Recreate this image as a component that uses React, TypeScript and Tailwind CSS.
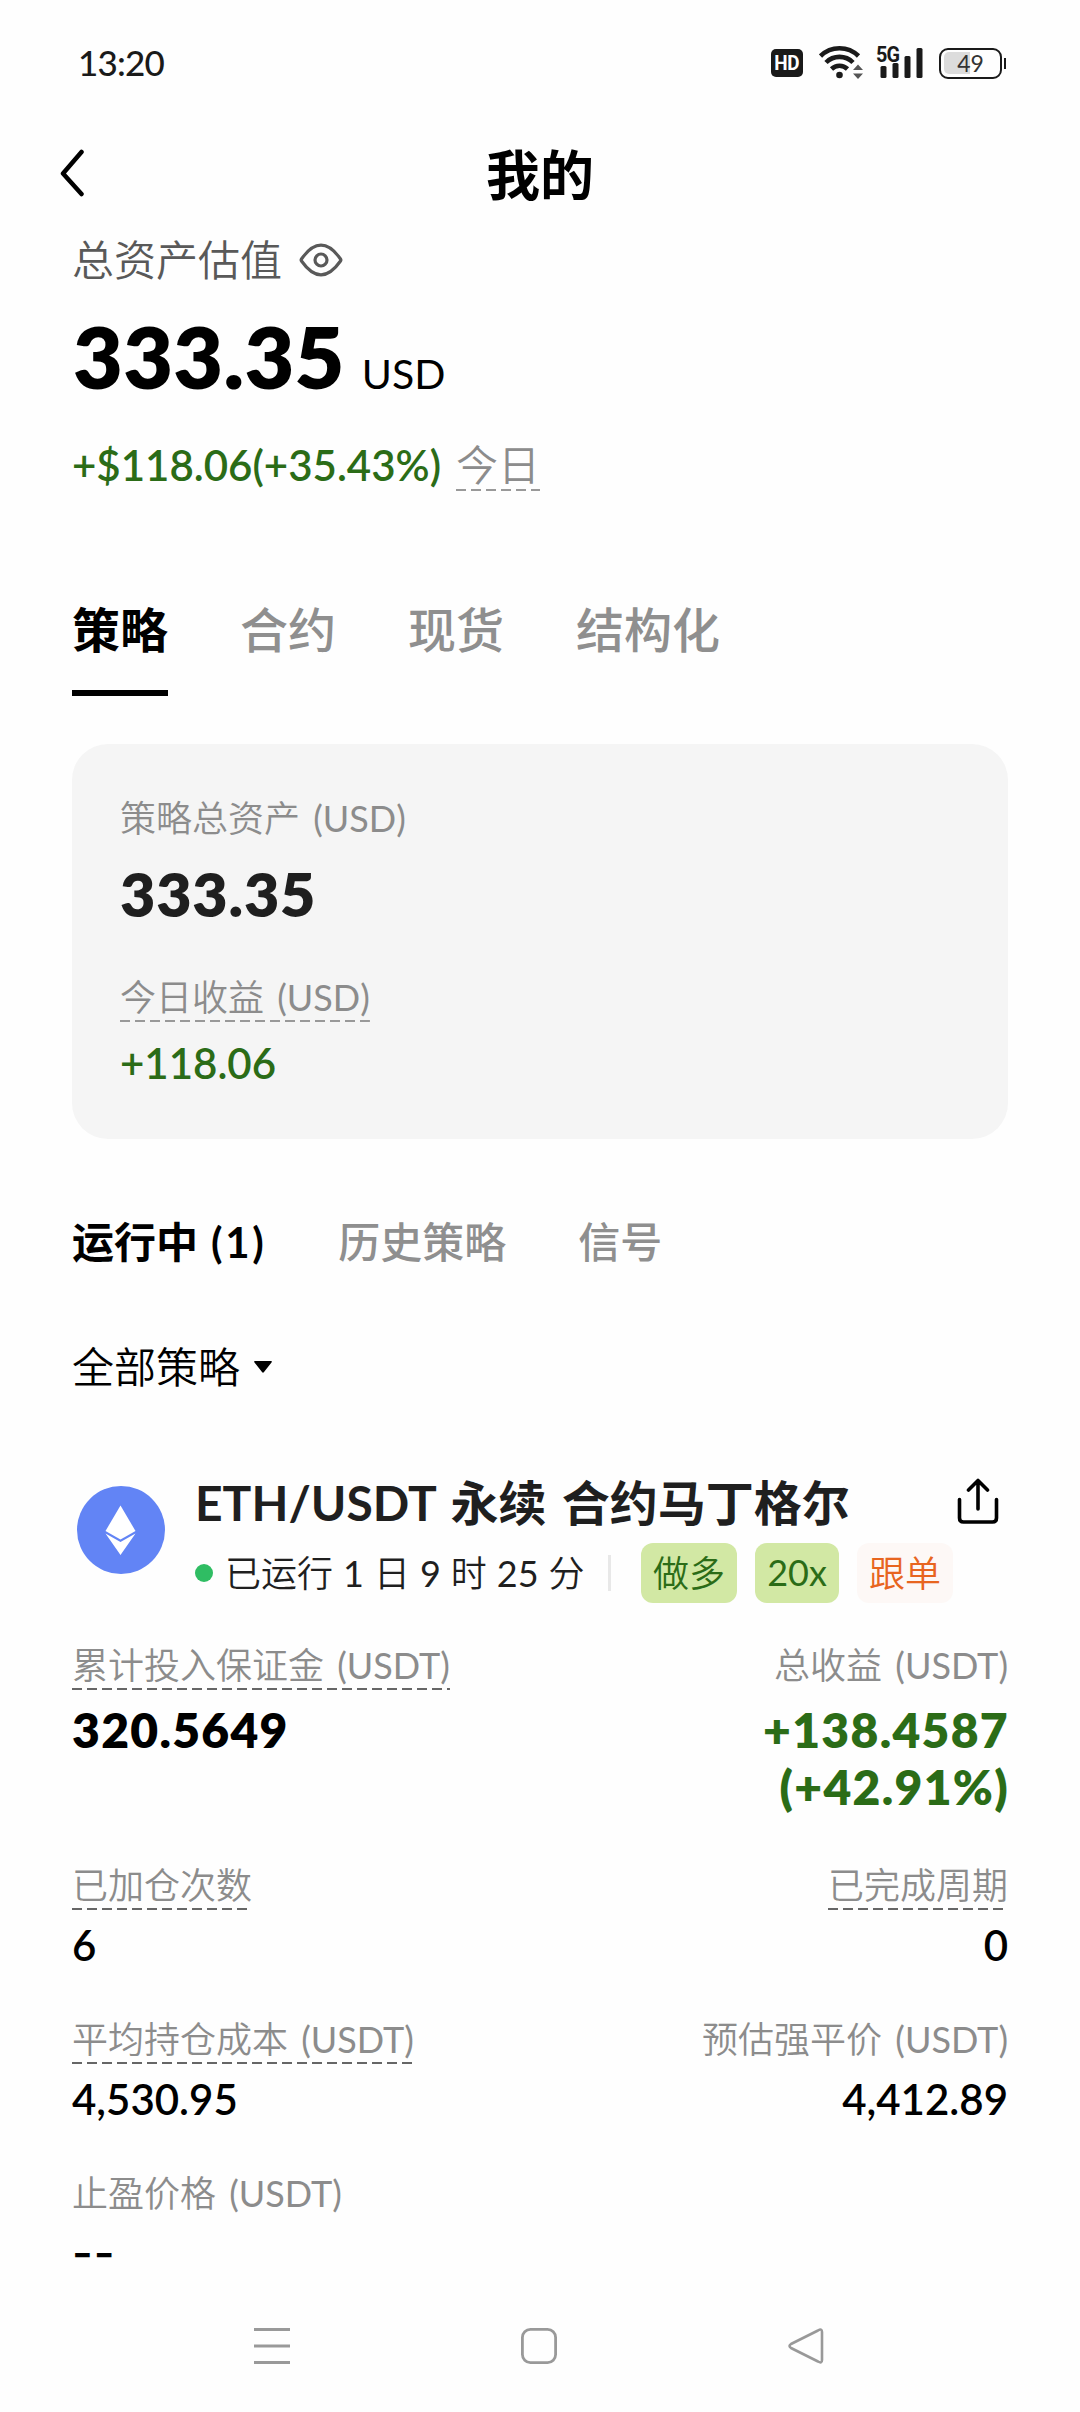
import { useState } from 'react';
import clsx from 'clsx';

const TABS = ['策略', '合约', '现货', '结构化'];
const SUB_TABS = [{ name: '运行中', count: 1 }, { name: '历史策略' }, { name: '信号' }];

const THIN = "font-['Lato','Noto_Sans_CJK_SC_DemiLight','Noto_Sans_CJK_SC',sans-serif] font-normal";
const DASH_LIGHT =
  'bg-[repeating-linear-gradient(90deg,#999_0_10px,transparent_10px_15px)] bg-[length:100%_2px] bg-bottom bg-no-repeat';
const DASH_DARK =
  'bg-[repeating-linear-gradient(90deg,#666_0_10px,transparent_10px_15px)] bg-[length:100%_2px] bg-bottom bg-no-repeat';

function StatusBar() {
  return (
    <div className="h-[124px] flex items-center justify-between pl-[78px] pr-[74px] text-[#1a1a1a]">
      <span className="text-[35px] font-medium leading-none tracking-[-0.8px]">13:20</span>
      <div className="flex items-center">
        <div className="w-8 h-7 mt-0.5 rounded-[5px] bg-[#1a1a1a] flex items-center justify-center">
          <span className="font-['Roboto',sans-serif] text-white text-[21px] leading-none font-bold tracking-[-0.5px] scale-x-90">HD</span>
        </div>
        <svg className="ml-4" width="44" height="36" viewBox="0 0 44 36" fill="none">
          <path d="M1.500 12a27 27 0 0 1 38 0M7 18.500a19 19 0 0 1 27 0M12.500 25a11.500 11.500 0 0 1 16 0" stroke="#1a1a1a" strokeWidth="4.600" />
          <circle cx="20.500" cy="31" r="3.300" fill="#1a1a1a" />
          <path d="M39 20.500l5 5.500H34zM39 35l5-5.500H34z" fill="#555" />
        </svg>
        <div className="relative ml-[14px] w-[47px] h-9">
          <span className="absolute left-[-1px] top-0.5 font-['Roboto',sans-serif] text-[22px] leading-[17px] font-bold tracking-[-1px] scale-x-[0.9] origin-left">
            5G
          </span>
          <svg width="47" height="36" viewBox="0 0 47 36" fill="#1a1a1a">
            <rect x="3.500" y="22" width="6" height="12" rx="1.500" />
            <rect x="15.500" y="19" width="6" height="15" rx="1.500" />
            <rect x="27.500" y="12" width="6" height="22" rx="1.500" />
            <rect x="39.500" y="4" width="6" height="30" rx="1.500" />
          </svg>
        </div>
        <div className="ml-[15px] mt-0.5 relative w-[63px] h-[31px] rounded-[9px] border-[2.5px] border-[#1a1a1a] p-[2.5px]">
          <div className="w-[26px] h-full rounded-l-[5px] bg-[#dcdcdc]" />
          <span className="absolute inset-0 flex items-center justify-center text-[23px] leading-none text-[#333]">49</span>
        </div>
        <div className="ml-0.5 mt-0.5 w-0.5 h-[11px] bg-[#1a1a1a]" />
      </div>
    </div>
  );
}

function EthIcon() {
  return (
    <svg width="88" height="88" viewBox="0 0 88 88">
      <circle cx="44" cy="44" r="44" fill="#6284f5" />
      <path d="M43.500 19.500L58.500 45 43.500 53.500 28.500 45z" fill="#fff" />
      <path d="M28.500 47.500l15 8.500 15-8.500-15 21.500z" fill="#fff" />
    </svg>
  );
}

interface FieldProps {
  label: string;
  value?: string[];
  dashed?: boolean;
  right?: boolean;
  strong?: boolean;
  green?: boolean;
}

function Field({ label, value, dashed, right, strong, green }: FieldProps) {
  return (
    <div className={clsx('flex flex-col', right ? 'items-end' : 'items-start')}>
      <span className={clsx('text-[36px] leading-[50px] text-[#8c8c8c] [word-spacing:4px]', THIN, dashed && DASH_DARK)}>
        {label}
      </span>
      <div
        className={clsx(
          'flex flex-col',
          right && 'items-end',
          strong ? 'mt-[11px] text-[48px] leading-[57px] font-extrabold tracking-[1.3px]' : 'mt-[9px] text-[42px] leading-[52px] font-semibold',
          right && strong && '-mr-px',
          green ? 'text-[#2b6c17]' : 'text-black',
        )}
      >
        {value ? (
          value.map((line) => <span key={line}>{line}</span>)
        ) : (
          <span className="font-['Inter',sans-serif] text-[45px] font-medium tracking-[1px]">--</span>
        )}
      </div>
    </div>
  );
}

export default function App() {
  const [tab, setTab] = useState(TABS[0]);
  const [subTab, setSubTab] = useState(SUB_TABS[0].name);

  return (
    <div className="w-[1080px] h-[2412px] overflow-hidden bg-[#fefefe] text-black whitespace-nowrap flex flex-col font-['Lato','Noto_Sans_CJK_SC',sans-serif]">
      <StatusBar />

      {/* Header */}
      <div className="h-[98px] grid grid-cols-[1fr_auto_1fr] items-center px-[60px]">
        <svg width="24" height="48" viewBox="0 0 24 48" fill="none" stroke="#000" strokeWidth="4.500" strokeLinecap="round" strokeLinejoin="round">
          <path d="M21.500 3L3 24.500 21.500 45" />
        </svg>
        <h1 className="pt-1.5 text-[54px] leading-none font-bold">我的</h1>
      </div>

      {/* Total assets */}
      <div className="px-[72px]">
        <div className="h-[76px] flex items-center">
          <span className={clsx('text-[42px] leading-none text-[#595959]', THIN)}>总资产估值</span>
          <svg className="ml-[17px]" width="44" height="34" viewBox="0 0 44 34" fill="none" stroke="#595959" strokeWidth="3.200" strokeLinejoin="round">
            <path d="M2.500 18Q1.800 17 2.500 16C9.500 6 15 2.200 22 2.200S34.500 6 41.500 16q.7 1 0 2C34.500 28 29 31.800 22 31.800S9.500 28 2.500 18z" />
            <circle cx="22" cy="17" r="6" />
          </svg>
        </div>
        <div className="h-[118px] flex items-baseline">
          <span className="ml-px text-[86px] leading-[116px] font-extrabold tracking-[0.3px]">333.35</span>
          <span className="ml-[17px] text-[41px]">USD</span>
        </div>
        <div className="h-[98px] flex items-center text-[42px]">
          <span className="font-semibold text-[#2b6c17]">+$118.06(+35.43%)</span>
          <span className={clsx('ml-[15px] leading-[52px] text-[#8c8c8c]', THIN, DASH_LIGHT)}>今日</span>
        </div>
      </div>

      {/* Main tabs */}
      <div className="mt-[82px] px-[72px] flex gap-[72px]">
        {TABS.map((name) => (
          <button
            key={name}
            onClick={() => setTab(name)}
            className={clsx(
              'h-[100px] pt-1 flex items-start text-[48px] leading-[60px] border-b-[6px]',
              tab === name ? 'font-bold text-black border-black' : 'font-medium text-[#8f8f8f] border-transparent',
            )}
          >
            {name}
          </button>
        ))}
      </div>

      {/* Strategy summary */}
      <div className="mt-12 mx-[72px] h-[395px] rounded-[36px] bg-[#f5f5f5] px-12 pt-[49px] flex flex-col items-start">
        <span className={clsx('text-[36px] leading-[50px] text-[#8c8c8c] [word-spacing:4px]', THIN)}>策略总资产 (USD)</span>
        <span className="mt-[13px] text-[61px] leading-[76px] font-extrabold tracking-[0.8px] text-[#1f1f1f]">333.35</span>
        <span className={clsx('mt-10 text-[36px] leading-[50px] text-[#8c8c8c] [word-spacing:4px]', THIN, DASH_LIGHT)}>
          今日收益 (USD)
        </span>
        <span className="mt-[13px] text-[42px] leading-[56px] font-semibold text-[#2b6c17]">+118.06</span>
      </div>

      {/* Status tabs */}
      <div className="mt-[73px] px-[72px] flex gap-[72px]">
        {SUB_TABS.map(({ name, count }) => (
          <button
            key={name}
            onClick={() => setSubTab(name)}
            className={clsx(
              'text-[42px] leading-[60px]',
              subTab === name ? 'font-bold text-black' : 'font-medium text-[#8f8f8f]',
            )}
          >
            {name}
            {count && <span className="ml-[13px] tracking-[2.6px]">({count})</span>}
          </button>
        ))}
      </div>

      <button className={clsx('mt-[65px] px-[72px] flex items-center text-[42px] leading-[60px]', THIN)}>
        全部策略
        <svg className="ml-[14px]" width="18" height="12" viewBox="0 0 18 12">
          <path d="M1 0h16q1.500 0 .5 1.500L10 11q-1 1.500-2 0L.5 1.500Q-.5 0 1 0z" />
        </svg>
      </button>

      {/* Running strategy */}
      <div className="mt-[75px] px-[72px]">
        <div className="flex">
          <div className="ml-[5px] mt-[14px]">
            <EthIcon />
          </div>
          <div className="ml-[30px] flex-1">
            <div className="flex items-center justify-between h-[62px] pr-[9px]">
              <span className="text-[48px] leading-[62px] font-bold text-[#1f1f1f] [word-spacing:3.500px]">ETH/USDT 永续 合约马丁格尔</span>
              <svg className="-mt-[5px]" width="42" height="46" viewBox="0 0 42 46" fill="none" stroke="#000" strokeWidth="3.600" strokeLinecap="round" strokeLinejoin="round">
                <path d="M2.500 21.500V40q0 4 4 4h29q4 0 4-4V21.500M21 31V2.500M11.500 12L21 2.500l9.500 9.500" />
              </svg>
            </div>
            <div className={clsx('mt-[9px] flex items-center h-[60px] text-[36px] leading-none', THIN)}>
              <span className="w-[18px] h-[18px] rounded-full bg-[#2fbd63]" />
              <span className="ml-3 w-[370px] text-[#1f1f1f] [word-spacing:0.8px]">已运行 1 日 9 时 25 分</span>
              <span className="ml-[13px] w-[3px] h-9 bg-[#e8e8e8]" />
              <span className="ml-[30px] w-24 h-[60px] rounded-xl bg-[#d2e8a4] text-[#2b6c17] flex items-center justify-center">做多</span>
              <span className="ml-[18px] w-[84px] h-[60px] pb-0.5 rounded-xl bg-[#d2e8a4] text-[#2b6c17] flex items-center justify-center">20x</span>
              <span className="ml-[18px] w-24 h-[60px] rounded-xl bg-[#fdf8f6] text-[#e8651f] flex items-center justify-center">跟单</span>
            </div>
          </div>
        </div>

        <div className="mt-[37px] flex justify-between">
          <Field label="累计投入保证金 (USDT)" value={['320.5649']} dashed strong />
          <Field label="总收益 (USDT)" value={['+138.4587', '(+42.91%)']} right strong green />
        </div>
        <div className="mt-[45px] flex justify-between">
          <Field label="已加仓次数" value={['6']} dashed />
          <Field label="已完成周期" value={['0']} dashed right />
        </div>
        <div className="mt-[43px] flex justify-between">
          <Field label="平均持仓成本 (USDT)" value={['4,530.95']} dashed />
          <Field label="预估强平价 (USDT)" value={['4,412.89']} right />
        </div>
        <div className="mt-[43px] flex justify-between">
          <Field label="止盈价格 (USDT)" />
        </div>
      </div>

      {/* System navigation */}
      <div className="mt-auto h-[132px] pl-[254px] pr-[256px] flex items-center justify-between">
        <svg width="36" height="36" viewBox="0 0 36 36" stroke="#999" strokeWidth="3">
          <path d="M0 1.500h36M0 18h36M0 34.500h36" />
        </svg>
        <svg width="36" height="36" viewBox="0 0 36 36" fill="none" stroke="#999" strokeWidth="2.800">
          <rect x="1.400" y="1.400" width="33.200" height="33.200" rx="8" />
        </svg>
        <svg width="36" height="36" viewBox="0 0 36 36" fill="none" stroke="#999" strokeWidth="2.600" strokeLinejoin="round">
          <path d="M30 2.500Q34 0 34 4v28q0 4-4 1.500L3 20q-3-2 0-4z" />
        </svg>
      </div>
    </div>
  );
}
